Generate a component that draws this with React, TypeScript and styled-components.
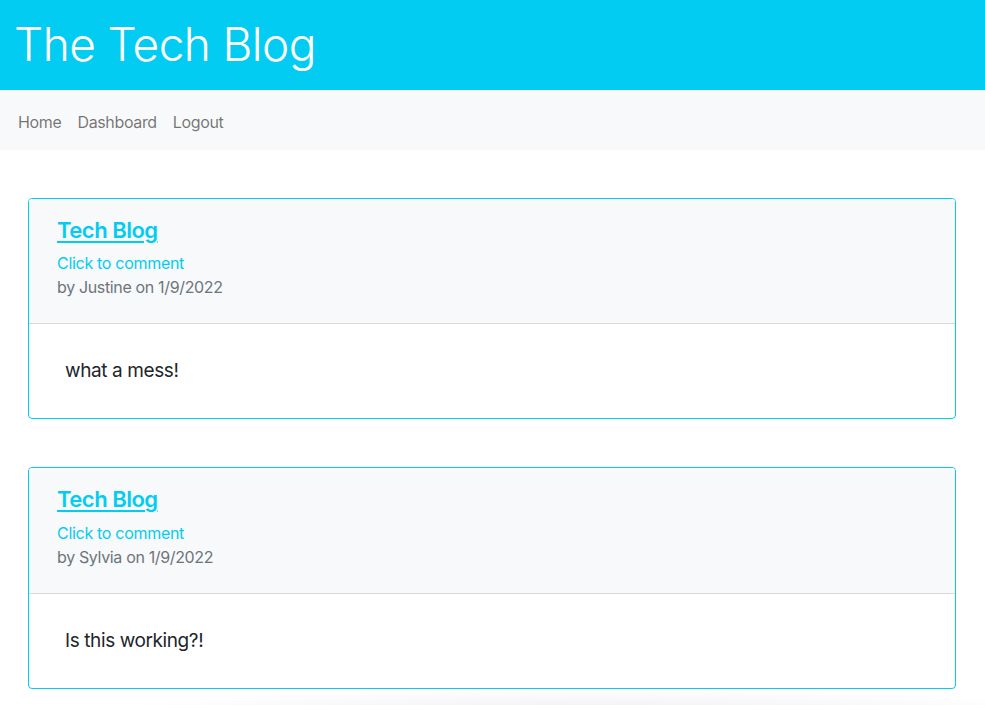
import React from "react";
import styled, { createGlobalStyle } from "styled-components";

const GlobalStyle = createGlobalStyle`
  * { box-sizing: border-box; }
  html, body { margin: 0; padding: 0; background: #fff; }
  body {
    font-family: Inter, "Noto Sans", "Liberation Sans", sans-serif;
    color: #212529;
    font-size: 16px;
    line-height: 1.5;
  }
`;

const Page = styled.div`
  min-height: 705px;
  display: flex;
  flex-direction: column;
  position: relative;
  overflow: hidden;
`;

const Banner = styled.header`
  background: #03ccf2;
  height: 90px;
  display: flex;
  align-items: center;
  padding: 0 14px 0;
`;

const BrandTitle = styled.h1`
  margin: 0;
  color: #fff;
  font-size: 46px;
  font-weight: 300;
  line-height: 1.2;
  letter-spacing: -0.6px;
`;

const NavBar = styled.nav`
  background: #f8f9fa;
  height: 60px;
  display: flex;
  align-items: center;
  padding: 4px 10px 0;
`;

const NavLink = styled.a`
  color: rgba(0, 0, 0, 0.55);
  text-decoration: none;
  font-size: 16px;
  padding: 8px 8px;
  letter-spacing: -0.35px;
`;

const Main = styled.main`
  display: flex;
  flex-direction: column;
  gap: 48px;
  padding: 48px 29px 0 28px;
`;

const Card = styled.article`
  border: 1px solid #03ccf2;
  border-radius: 4px;
  background: #fff;
  overflow: hidden;
`;

const CardHeader = styled.div`
  background: #f8f9fa;
  border-bottom: 1px solid rgba(0, 0, 0, 0.125);
  padding: 18px 28px 24px;
  display: flex;
  flex-direction: column;
`;

const PostTitle = styled.a`
  color: #03ccf2;
  font-size: 22px;
  font-weight: 600;
  line-height: 1.2;
  text-decoration: underline;
  text-decoration-thickness: 2px;
  text-underline-offset: 3px;
  letter-spacing: -0.5px;
  align-self: flex-start;
  margin-bottom: 8px;
`;

const CommentLink = styled.a`
  color: #03ccf2;
  font-size: 16px;
  line-height: 24px;
  text-decoration: none;
  letter-spacing: -0.3px;
`;

const Meta = styled.div`
  color: #6c757d;
  font-size: 16px;
  line-height: 24px;
  letter-spacing: -0.35px;
`;

const CardBody = styled.div`
  padding: 32px 36px;
  font-size: 19px;
  line-height: 29px;
  color: #212529;
  letter-spacing: -0.4px;
  height: 94px;
`;

const BottomShadow = styled.div`
  position: absolute;
  left: 60px;
  right: -40px;
  top: 688px;
  height: 40px;
  pointer-events: none;
  background: radial-gradient(ellipse 60% 100% at 55% 100%, rgba(0,0,0,0.1), rgba(0,0,0,0) 100%);
`;

const posts = [
  { author: "Justine", date: "1/9/2022", body: "what a mess!" },
  { author: "Sylvia", date: "1/9/2022", body: "Is this working?!" },
];

export default function App() {
  return (
    <>
      <GlobalStyle />
      <Page>
        <Banner>
          <BrandTitle>The Tech Blog</BrandTitle>
        </Banner>
        <NavBar>
          <NavLink href="#">Home</NavLink>
          <NavLink href="#">Dashboard</NavLink>
          <NavLink href="#">Logout</NavLink>
        </NavBar>
        <Main>
          {posts.map((p, i) => (
            <Card key={i}>
              <CardHeader>
                <PostTitle href="#">Tech Blog</PostTitle>
                <CommentLink href="#">Click to comment</CommentLink>
                <Meta>
                  by {p.author} on {p.date}
                </Meta>
              </CardHeader>
              <CardBody>{p.body}</CardBody>
            </Card>
          ))}
        </Main>
        <BottomShadow />
      </Page>
    </>
  );
}
